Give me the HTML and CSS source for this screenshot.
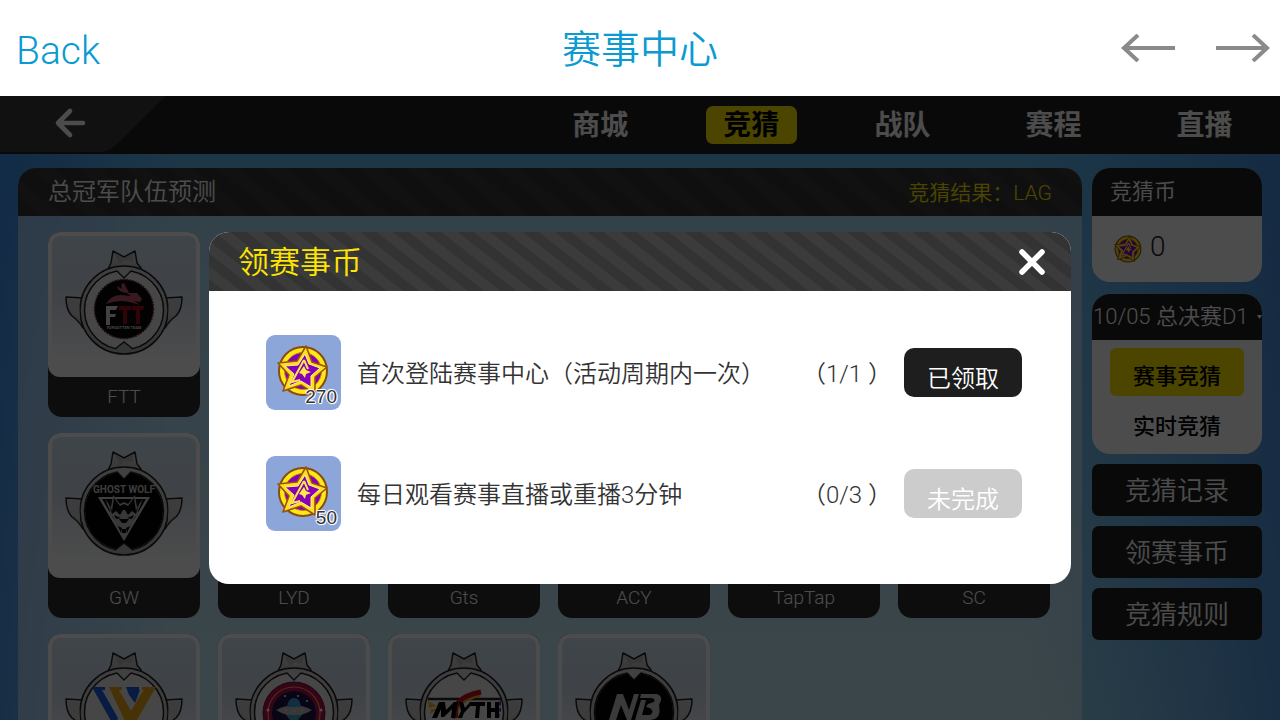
FILE: index.html
```html
<!DOCTYPE html>
<html lang="zh-CN">
<head>
<meta charset="utf-8">
<title>赛事中心</title>
<link rel="stylesheet" href="styles.css">
</head>
<body>
<svg class="defs" aria-hidden="true">
  <defs>
    <linearGradient id="metal" x1="0" y1="0" x2="0" y2="1">
      <stop offset="0" stop-color="#d6d6d6"/><stop offset="1" stop-color="#b2b2b2"/>
    </linearGradient>
    <symbol id="emblem" viewBox="0 0 120 108">
      <g fill="url(#metal)" stroke="#222" stroke-width="1.5" stroke-linejoin="round">
        <path d="M19 48 2 47Q2 60 8 66Q14 70 19 78Z"/>
        <path d="M101 48 118 47Q118 60 112 66Q106 70 101 78Z"/>
        <path d="M43 21 47 13 49 1 60 7 71 1 73 13 77 18 78 28H42Z"/>
        <circle cx="60" cy="60" r="44"/>
      </g>
      <path d="M50 3 60 9 70 3 68 11 60 10 56 14Z" fill="#b4b4b4"/>
      <path d="M4 49 15 50 16 69Q6 64 4 49ZM116 49 105 50 104 69Q114 64 116 49Z" fill="#c9c9c9"/>
      <circle cx="60" cy="60" r="39.5" fill="#ececec" stroke="#222" stroke-width="1.5"/>
    </symbol>
    <symbol id="notch" viewBox="0 0 120 108">
      <path d="M53 20 60 28 67 20Q60 18 53 20Z" fill="#dadada"/>
      <path d="M53 21 60 28 67 21" fill="none" stroke="#222" stroke-width="1.4"/>
      <path d="M51 100 60 92 69 100Q60 103 51 100Z" fill="#b4b4b4"/>
      <path d="M51 99 60 92 69 99" fill="none" stroke="#222" stroke-width="1.4"/>
    </symbol>
    <symbol id="coin" viewBox="0 0 52 54">
      <circle cx="26" cy="27" r="24" fill="#ffe818" stroke="#8a4a10" stroke-width="2"/>
      <circle cx="26" cy="27" r="18.500" fill="#8500b8" stroke="#d08a10" stroke-width="1"/>
      <path d="M29 2 35 18 50 23 38 33 38 50 24 41 6 47 12 31 1 19 20 17Z" fill="#ffdf20" stroke="#96520c" stroke-width="1.600" stroke-linejoin="round"/>
      <path d="M28 10 32 20 43 24 34 32 34 43 24 37 12 42 17 30 8 22 21 21Z" fill="#8500b8" stroke="#fff58a" stroke-width="1" stroke-linejoin="round"/>
      <path d="M27 16 15 38 23 36M27 16 31 25" fill="none" stroke="#ffe94a" stroke-width="2"/>
      <path d="M27 22 29 26 34 28 29 30 28 34 25 30 22 29Z" fill="#ffe94a"/>
    </symbol>
  </defs>
</svg>

<header class="topbar">
  <button class="topbar-back" type="button">Back</button>
  <h1 class="topbar-title">赛事中心</h1>
  <div class="topbar-nav">
    <button class="plain" type="button" aria-label="后退"><svg width="54" height="28" viewBox="0 0 54 28"><path d="M2 14H54M17 1 3 14 17 27" class="thin-arrow"/></svg></button>
    <button class="plain" type="button" aria-label="前进"><svg width="54" height="28" viewBox="0 0 54 28"><path d="M0 14H52M37 1 51 14 37 27" class="thin-arrow"/></svg></button>
  </div>
</header>

<div class="app">
  <div class="menu">
    <button class="menu-back" type="button" aria-label="返回">
      <svg width="166" height="56" viewBox="0 0 166 56"><path d="M0 0H166L118 47Q110 56 98 56H0Z" fill="#393939"/><path d="M83 27H59M70 15 58 27 70 39" fill="none" stroke="#fff" stroke-width="4.600" stroke-linecap="round" stroke-linejoin="round"/></svg>
    </button>
    <nav class="tabs">
      <a href="#mall">商城</a>
      <a href="#guess" class="active">竞猜</a>
      <a href="#teams">战队</a>
      <a href="#schedule">赛程</a>
      <a href="#live">直播</a>
    </nav>
  </div>

  <main class="content">
    <section class="panel">
      <div class="panel-head">
        <h2>总冠军队伍预测</h2>
        <span class="result">竞猜结果：LAG</span>
      </div>
      <div class="teams">
        <div class="team-row">
          <article class="team">
            <div class="badge">
              <svg viewBox="0 0 120 108"><use href="#emblem"/><use href="#notch"/>
                <circle cx="60" cy="59" r="29.5" fill="#080808" stroke="#6b3038" stroke-width="1.5" stroke-dasharray="2 1"/>
                <path d="M42 54Q47 45 57 45L67 46 63 43Q54 42 53 36L58 39Q56 33 60 33L65 43 73 43 78 49 76 52 70 51 76 55 66 52Q54 49 42 54Z" fill="#bd5767"/>
                <path d="M42 56H54L52 60H46V64H52L51 67H46V75H42Z" fill="#ddd"/>
                <path d="M55 56H67V60H63V74H59V60H55ZM68 56H80L79 60H76V74H72V60H68Z" fill="#a20e18"/>
                <text x="60" y="79" class="logo-tiny">FORGOTTEN TEAM</text>
              </svg>
            </div>
            <h3>FTT</h3>
          </article>
        </div>
        <div class="team-row">
          <article class="team">
            <div class="badge">
              <svg viewBox="0 0 120 108"><use href="#emblem"/>
                <circle cx="60" cy="60" r="39" fill="#050505"/><use href="#notch"/>
                <text x="60" y="42" class="logo-wolf">GHOST WOLF</text>
                <path d="M34 46H86L60 90Z" fill="#d5d5d5"/>
                <path d="M38 48H82L60 86Z" fill="#080808"/>
                <path d="M41 48 46 60 44 64 49 66 53 78 60 88 67 78 71 66 76 64 74 60 79 48 73 56 71 44 64 53 60 51 56 53 49 44 47 56Z" fill="#bbb"/>
                <path d="M44 50 48 60 50 47 56 55 60 53 64 55 70 47 72 60 76 50 72 63 68 60 64 64 61 59 59 59 56 64 52 60 48 63Z" fill="#080808"/>
                <path d="M50 64 57 67 52 68ZM70 64 63 67 68 68ZM55 68H65L62 72H58ZM54 75 58 77 57 82ZM66 75 62 77 63 82ZM58 78H62V82H58Z" fill="#080808"/>
              </svg>
            </div>
            <h3>GW</h3>
          </article>
          <article class="team"><div class="badge"><svg viewBox="0 0 120 108"><use href="#emblem"/><use href="#notch"/></svg></div><h3>LYD</h3></article>
          <article class="team"><div class="badge"><svg viewBox="0 0 120 108"><use href="#emblem"/><use href="#notch"/></svg></div><h3>Gts</h3></article>
          <article class="team"><div class="badge"><svg viewBox="0 0 120 108"><use href="#emblem"/><use href="#notch"/></svg></div><h3>ACY</h3></article>
          <article class="team"><div class="badge"><svg viewBox="0 0 120 108"><use href="#emblem"/><use href="#notch"/></svg></div><h3>TapTap</h3></article>
          <article class="team"><div class="badge"><svg viewBox="0 0 120 108"><use href="#emblem"/><use href="#notch"/></svg></div><h3>SC</h3></article>
        </div>
        <div class="team-row">
          <article class="team">
            <div class="badge">
              <svg viewBox="0 0 120 108"><use href="#emblem"/><use href="#notch"/>
                <path d="M28 35H41V38H38L54 66 51 76ZM62 35H75V38H76L71 51 65 43Z" fill="#1d5fe0"/>
                <path d="M45 35H58V38H55L67 59 77 42 80 38H78V35H92L66 80Z" fill="#efa31a"/>
              </svg>
            </div>
          </article>
          <article class="team">
            <div class="badge">
              <svg viewBox="0 0 120 108"><use href="#emblem"/><use href="#notch"/>
                <circle cx="60" cy="61" r="31" fill="#b40f4b" stroke="#631a38"/>
                <circle cx="60" cy="61" r="26" fill="none" stroke="#e5a45c" stroke-width="1.2"/>
                <circle cx="60" cy="61" r="22" fill="#1d1247"/>
                <path d="M42 58Q52 53 60 53T78 58Q68 64 60 64T42 58Z" fill="#b9bbc4"/><path d="M53 55Q54 46 60 46T67 55Z" fill="#3a9fd0"/><path d="M52 63H68L64 68H56Z" fill="#37a6ba"/>
                <g fill="#ffd65a"><circle cx="52" cy="58" r="1.2"/><circle cx="60" cy="59" r="1.2"/><circle cx="68" cy="58" r="1.2"/></g>
                <g fill="#fff"><circle cx="51" cy="44" r="1"/><circle cx="64" cy="44" r="1"/><circle cx="73" cy="49" r="1"/><circle cx="34" cy="58" r="1.5"/><circle cx="87" cy="58" r="1.5"/></g>
              </svg>
            </div>
          </article>
          <article class="team">
            <div class="badge">
              <svg viewBox="0 0 120 108"><use href="#emblem"/><use href="#notch"/>
                <path d="M24 47H97" stroke="#222" stroke-width="2.4"/>
                <path d="M24 49 33 54 25 56ZM27 57 33 57 26 62Z" fill="#f3b022"/>
                <path d="M97 49 91 51 97 54ZM97 56 90 57 97 60ZM96 62 90 62 95 66Z" fill="#6a32d2"/>
                <path d="M52 66Q48 48 76 42" fill="none" stroke="#efae22" stroke-width="6"/>
                <path d="M52 66Q46 46 77 40" fill="none" stroke="#c31218" stroke-width="5"/>
                <path d="M28 66 35 50H41L42 58 50 50H54L51 66H47L48 57 40 65H37L37 57 33 66ZM55 50H59L61 56 66 50H70L60 61 58 66H54L57 59ZM68 50H81V54H76L75 66H71L72 54H67ZM83 50H87V56H91V50H95V66H91V60H87V66H83Z" fill="#050505"/>
              </svg>
            </div>
          </article>
          <article class="team">
            <div class="badge">
              <svg viewBox="0 0 120 108"><use href="#emblem"/>
                <circle cx="60" cy="60" r="39" fill="#050505"/><use href="#notch"/>
                <path d="M43 42H49L55 58 60 42H65L57 68H53L47 53 42 68H35Z" fill="#c4c4c4"/>
                <path d="M67 42H83Q90 44 85 53 88 67 76 68H61L67 48H72L68 63H76Q81 60 76 56L72 55 74 52 80 50Q82 46 76 46H66Z" fill="#c4c4c4"/>
              </svg>
            </div>
          </article>
        </div>
      </div>
    </section>

    <aside class="side">
      <section class="side-card">
        <h2 class="side-head">竞猜币</h2>
        <p class="balance"><svg width="28" height="30"><use href="#coin"/></svg><span>0</span></p>
      </section>
      <section class="side-card">
        <div class="date">
          <select aria-label="比赛日"><option>10/05 总决赛D1</option></select>
          <svg width="5" height="4" viewBox="0 0 5 4"><path d="M0 0H5L2.500 4Z" fill="#fff"/></svg>
        </div>
        <div class="modes">
          <button class="mode selected" type="button">赛事竞猜</button>
          <button class="mode" type="button">实时竞猜</button>
        </div>
      </section>
      <button class="side-btn" type="button">竞猜记录</button>
      <button class="side-btn" type="button">领赛事币</button>
      <button class="side-btn" type="button">竞猜规则</button>
    </aside>
  </main>

  <div class="overlay">
    <div class="dialog" role="dialog" aria-labelledby="dialog-title">
      <div class="dialog-head">
        <h2 id="dialog-title">领赛事币</h2>
        <button class="plain" type="button" aria-label="关闭"><svg width="28" height="28" viewBox="0 0 28 28"><path d="M4 4 24 24M24 4 4 24" stroke="#fff" stroke-width="5.500" stroke-linecap="round"/></svg></button>
      </div>
      <ul class="tasks">
        <li>
          <div class="reward"><svg width="52" height="54"><use href="#coin"/></svg><b>270</b></div>
          <span class="task-name">首次登陆赛事中心（活动周期内一次）</span>
          <span class="progress">（1/1 ）</span>
          <button class="claim done" type="button">已领取</button>
        </li>
        <li>
          <div class="reward"><svg width="52" height="54"><use href="#coin"/></svg><b>50</b></div>
          <span class="task-name">每日观看赛事直播或重播3分钟</span>
          <span class="progress">（0/3 ）</span>
          <button class="claim" type="button" disabled>未完成</button>
        </li>
      </ul>
    </div>
  </div>
</div>
</body>
</html>
```

FILE: styles.css
```css
* { box-sizing: border-box; margin: 0; padding: 0; }

body {
  display: flex;
  flex-direction: column;
  height: 100vh;
  overflow: hidden;
  background: #fff;
  font-family: Roboto, "Noto Sans CJK SC", sans-serif;
  font-weight: 350;
}

button, select { font: inherit; color: inherit; border: 0; background: none; cursor: pointer; }
h1, h2, h3 { font-weight: inherit; }
.plain { display: flex; }
.defs { position: absolute; width: 0; height: 0; }

.topbar {
  display: grid;
  grid-template-columns: 1fr auto 1fr;
  align-items: center;
  height: 96px;
  flex: none;
  padding: 0 10px 0 16px;
  color: #0a9bd2;
}
.topbar-back { justify-self: start; font-size: 40px; line-height: 56px; padding-top: 6px; font-family: "Liberation Sans", sans-serif; }
.topbar-title { font-size: 39px; line-height: 56px; padding-top: 4px; margin-left: -6px; }
.topbar-nav { display: flex; justify-content: flex-end; gap: 41px; }
.thin-arrow { fill: none; stroke: #8a8a8a; stroke-width: 4; }
.topbar-back { font-family: Roboto, sans-serif; font-size: 39px; }

.app {
  position: relative;
  display: flex;
  flex-direction: column;
  flex: 1;
  min-height: 0;
  overflow: hidden;
  background:
    linear-gradient(90deg, rgba(42, 120, 230, .65), transparent 14%, transparent 80%, rgba(60, 125, 215, .7)),
    linear-gradient(180deg, #5ab4ee, #9adcf4);
}

.menu { display: flex; justify-content: space-between; flex: none; height: 58px; background: #202020; }
.menu-back { display: flex; }
.tabs { display: grid; grid-template-columns: repeat(5, 1fr); width: 59%; align-items: center; }
.tabs a {
  padding-top: 2px;
  text-align: center;
  color: #fff;
  font-size: 28px;
  line-height: 36px;
  font-weight: 700;
  text-decoration: none;
}
.tabs .active { margin: 0 30px; color: #000; background: #ffe600; border-radius: 7px; }

.content { display: flex; gap: 10px; flex: 1; min-height: 0; padding: 14px 18px 0; }

.panel { flex: 1; background: rgba(255, 255, 255, .45); border-radius: 18px 18px 0 0; }
.panel-head {
  display: flex;
  justify-content: space-between;
  align-items: center;
  height: 48px;
  padding: 0 30px;
  color: #fff;
  border-radius: 18px 18px 0 0;
  background: repeating-linear-gradient(40deg, #343434 0 14px, #3a3a3a 16px 28px, #343434 30px);
}
.panel-head h2 { font-size: 24px; line-height: 36px; }
.result { color: #ffe600; font-size: 21px; line-height: 32px; padding-top: 2px; }

.teams { display: flex; flex-direction: column; gap: 16px; padding: 16px 32px 0 30px; }
.team-row { display: grid; grid-template-columns: repeat(6, 1fr); gap: 18px; }
.team { height: 185px; background: #2c2c2c; border-radius: 12px 12px 14px 14px; }
.badge {
  height: 145px;
  padding-top: 14px;
  text-align: center;
  border: 4px solid #fff;
  border-radius: 12px;
  background: linear-gradient(180deg, #d2e6f7, #d4dfec 40%, #fff 92%);
}
.badge svg { width: 120px; height: 108px; }
.team h3 { color: #fff; font-size: 19px; line-height: 40px; text-align: center; }

.logo-tiny { font: 700 4px Roboto, sans-serif; fill: #ddd; text-anchor: middle; }
.logo-wolf { font: 700 10px Roboto, sans-serif; fill: #ccc; text-anchor: middle; }

.side { display: flex; flex-direction: column; gap: 10px; flex: 0 0 170px; }
.side-card { background: #fff; border-radius: 18px; overflow: hidden; flex: none; }
.side-card:first-child { margin-bottom: 2px; }
.side-head { padding: 0 18px; font-size: 22px; line-height: 48px; color: #fff; background: #202020; }
.balance { display: flex; align-items: center; gap: 8px; height: 66px; padding: 0 22px; font-size: 28px; line-height: 32px; color: #222; }
.balance span { padding-bottom: 4px; }
.date { display: flex; align-items: center; justify-content: space-between; height: 46px; padding-left: 1px; color: #fff; background: #202020; }
.date select { appearance: none; flex: 1; min-width: 0; font-size: 22px; line-height: 44px; }
.modes { display: flex; flex-direction: column; gap: 4px; padding: 8px 18px 6px; }
.mode { height: 48px; font-size: 22px; font-weight: 500; color: #000; border-radius: 6px; }
.selected { background: #ffe600; padding-top: 4px; }
.side-btn { height: 52px; flex: none; padding-bottom: 4px; color: #fff; font-size: 26px; background: #202020; border-radius: 7px; }

.overlay { position: absolute; inset: 0; display: grid; place-items: center; background: rgba(0, 0, 0, .7); }
.dialog { width: 862px; max-width: 96%; background: #fff; border-radius: 20px; overflow: hidden; }
.dialog-head {
  display: flex;
  justify-content: space-between;
  align-items: center;
  height: 59px;
  padding: 0 25px 0 29px;
  color: #ffe600;
  background: repeating-linear-gradient(38deg, #333 0 9px, #3b3b3b 10px 19px, #333 20px);
}
.dialog-head h2 { font-size: 31px; line-height: 44px; padding-top: 2px; }
.tasks { display: flex; flex-direction: column; gap: 46px; padding: 44px 49px 53px 57px; list-style: none; }
.tasks li { display: flex; align-items: center; color: #333; font-size: 24px; line-height: 36px; }
.reward { position: relative; width: 75px; height: 75px; padding: 9px 11px; background: #8ca6da; border-radius: 9px; }
.reward b {
  position: absolute;
  right: 4px;
  bottom: 3px;
  font: 400 19px/20px "Liberation Sans", sans-serif;
  color: #333;
  text-shadow: 1px 0 #fff, -1px 0 #fff, 0 1px #fff, 0 -1px #fff, 1px 1px 1px #fff, -1px -1px 1px #fff;
}
.task-name { flex: 1; padding: 2px 0 0 16px; }
.progress { padding: 2px 12px 0 0; }
.claim { width: 118px; height: 49px; padding-top: 12px; color: #fff; line-height: 36px; background: #ccc; border-radius: 10px; }
.done { background: #1e1e1e; }
```
